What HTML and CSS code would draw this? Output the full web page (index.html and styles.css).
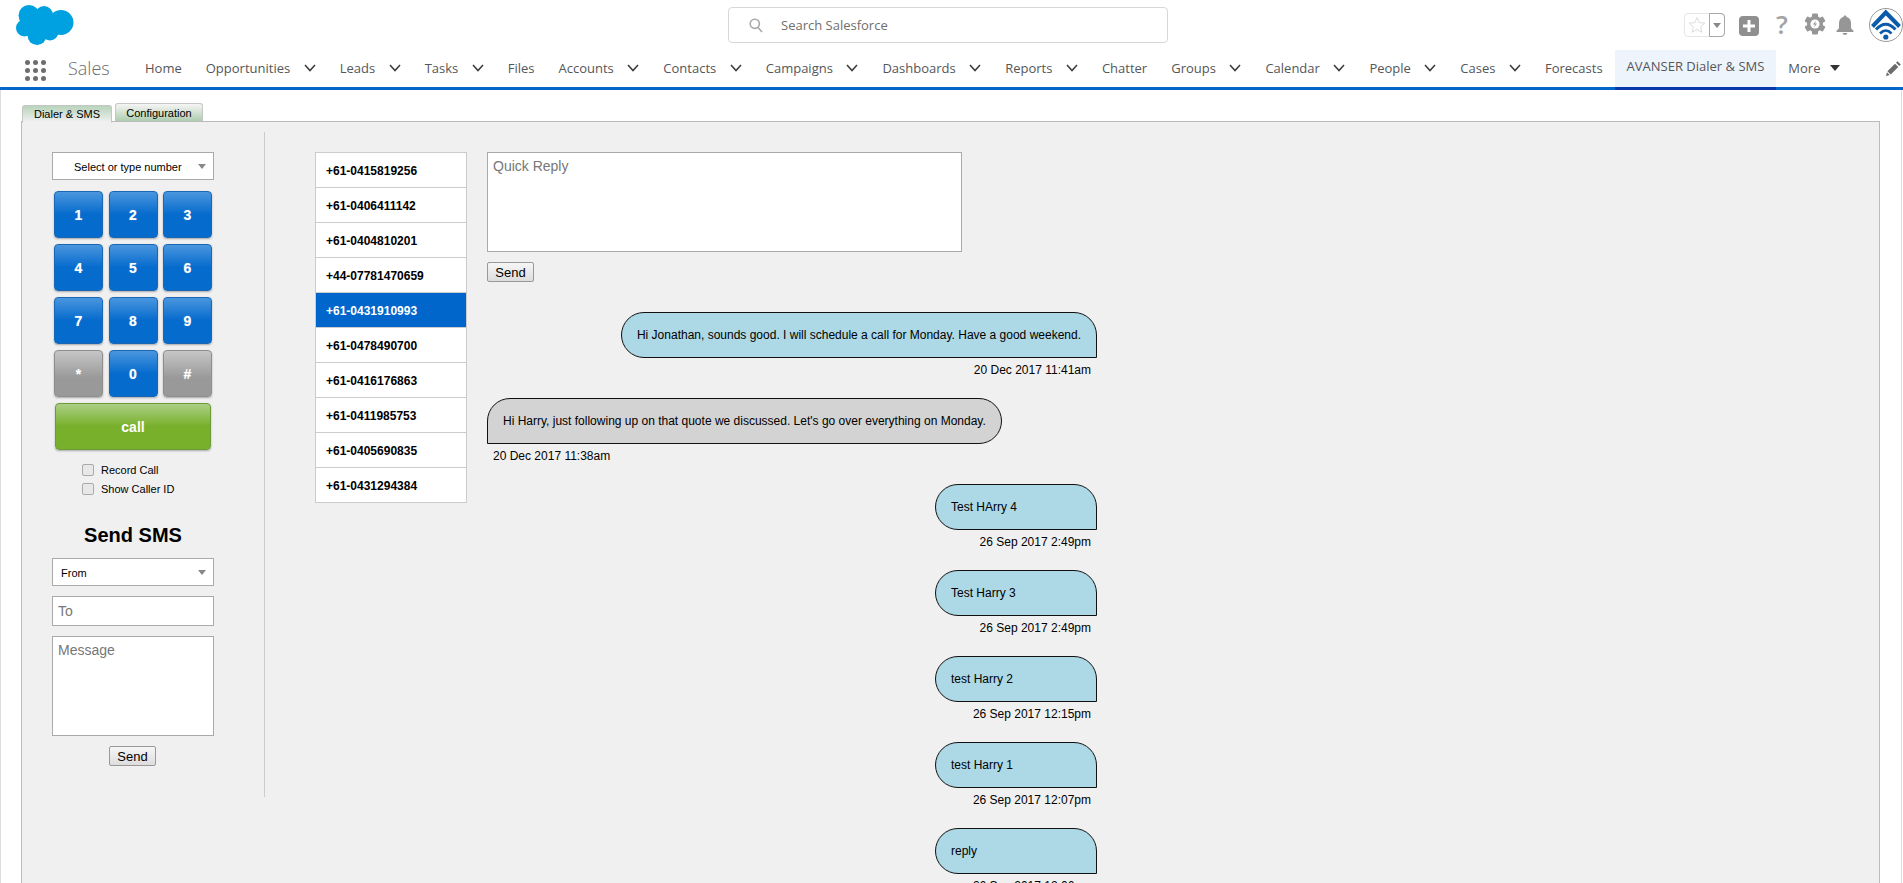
FILE: index.html
```html
<!DOCTYPE html>
<html lang="en">
<head>
<meta charset="utf-8">
<title>AVANSER Dialer &amp; SMS</title>
<link rel="stylesheet" href="styles.css">
</head>
<body>
<header class="topbar">
  <svg class="logo" viewBox="0 0 58 40" aria-label="Salesforce">
    <g fill="#00a1e0">
      <circle cx="13" cy="10.5" r="10.5"/><circle cx="28" cy="10" r="9"/><circle cx="45" cy="17.5" r="12.5"/>
      <circle cx="8.5" cy="23" r="8.5"/><circle cx="21" cy="30.5" r="9.5"/><circle cx="34" cy="27" r="8.5"/>
      <ellipse cx="26" cy="20" rx="18" ry="11"/>
    </g>
  </svg>
  <div class="search">
    <svg class="search-icon" viewBox="0 0 14 15"><circle cx="5.8" cy="5.8" r="4.6"/><line x1="9" y1="9.4" x2="13" y2="14"/></svg>
    <span>Search Salesforce</span>
  </div>
  <div class="utils">
    <div class="fav">
      <span class="fav-star"><svg viewBox="0 0 18 18"><polygon points="9,1.5 11.2,6.6 16.8,7.1 12.6,10.8 13.9,16.3 9,13.4 4.1,16.3 5.4,10.8 1.2,7.1 6.8,6.6"/></svg></span>
      <span class="fav-more"><i class="caret-grey"></i></span>
    </div>
    <svg class="u-plus" viewBox="0 0 20 20"><rect width="20" height="20" rx="4" fill="#8f8f8f"/><path d="M10 4v12M4 10h12" stroke="#fff" stroke-width="3"/></svg>
    <span class="u-help">?</span>
    <svg class="u-gear" viewBox="0 0 22 22">
      <g fill="#969696">
        <rect x="8" y="0.5" width="6" height="21" rx="1"/>
        <rect x="8" y="0.5" width="6" height="21" rx="1" transform="rotate(60 11 11)"/>
        <rect x="8" y="0.5" width="6" height="21" rx="1" transform="rotate(120 11 11)"/>
        <circle cx="11" cy="11" r="8"/>
      </g>
      <circle cx="11" cy="11" r="4.6" fill="#fff"/>
      <path d="M12 7.5l-3 4h2l-1 3 3-4h-2z" fill="#969696"/>
    </svg>
    <svg class="u-bell" viewBox="0 0 18 20"><path d="M9 0.5c1 0 1.6.7 1.6 1.6C13.600 2.800 15 5.200 15 8v4.200c0 1.500 1 2.300 2.300 3.300.7.600.4 1.500-.5 1.500H1.200c-.9 0-1.200-.9-.5-1.500C2 14.500 3 13.700 3 12.200V8c0-2.800 1.400-5.200 4.400-5.900C7.400 1.200 8 .5 9 .5z" fill="#969696"/><path d="M6.600 18h4.800c0 1.100-1.100 1.900-2.400 1.900S6.600 19.100 6.600 18z" fill="#969696"/></svg>
    <svg class="avatar" viewBox="0 0 34 34">
      <circle cx="17" cy="17" r="16.500" fill="#fff" stroke="#999"/>
      <path d="M3.500 18.500L16.800 4.500l13.700 14" fill="none" stroke="#0a5cab" stroke-width="4"/>
      <path d="M7 21.500Q16.800 11 26.500 21.500" fill="none" stroke="#0a5cab" stroke-width="3"/>
      <path d="M11 25.500Q16.800 19.500 22.500 25.500" fill="none" stroke="#0a5cab" stroke-width="2.600"/>
      <circle cx="16.800" cy="29" r="2.600" fill="#0a5cab"/>
    </svg>
  </div>
</header>

<nav class="navbar">
  <div class="launcher">
    <i></i><i></i><i></i><i></i><i></i><i></i><i></i><i></i><i></i>
  </div>
  <span class="app-name">Sales</span>
  <ul class="nav-items">
    <li>Home</li>
    <li>Opportunities<svg class="chev" viewBox="0 0 12 8"><path d="M1 1l5 5.500L11 1"/></svg></li>
    <li>Leads<svg class="chev" viewBox="0 0 12 8"><path d="M1 1l5 5.500L11 1"/></svg></li>
    <li>Tasks<svg class="chev" viewBox="0 0 12 8"><path d="M1 1l5 5.500L11 1"/></svg></li>
    <li>Files</li>
    <li>Accounts<svg class="chev" viewBox="0 0 12 8"><path d="M1 1l5 5.500L11 1"/></svg></li>
    <li>Contacts<svg class="chev" viewBox="0 0 12 8"><path d="M1 1l5 5.500L11 1"/></svg></li>
    <li>Campaigns<svg class="chev" viewBox="0 0 12 8"><path d="M1 1l5 5.500L11 1"/></svg></li>
    <li>Dashboards<svg class="chev" viewBox="0 0 12 8"><path d="M1 1l5 5.500L11 1"/></svg></li>
    <li>Reports<svg class="chev" viewBox="0 0 12 8"><path d="M1 1l5 5.500L11 1"/></svg></li>
    <li>Chatter</li>
    <li>Groups<svg class="chev" viewBox="0 0 12 8"><path d="M1 1l5 5.500L11 1"/></svg></li>
    <li>Calendar<svg class="chev" viewBox="0 0 12 8"><path d="M1 1l5 5.500L11 1"/></svg></li>
    <li>People<svg class="chev" viewBox="0 0 12 8"><path d="M1 1l5 5.500L11 1"/></svg></li>
    <li>Cases<svg class="chev" viewBox="0 0 12 8"><path d="M1 1l5 5.500L11 1"/></svg></li>
    <li>Forecasts</li>
    <li class="active">AVANSER Dialer &amp; SMS</li>
    <li>More<i class="caret-dark"></i></li>
  </ul>
  <svg class="edit" viewBox="0 0 16 16"><path d="M11.500 1.200l3.300 3.300-1.500 1.500-3.300-3.300zM9 3.700L12.300 7l-7.600 7.600-3.300-3.300zM.9 12.300l2.800 2.800-3.700.9z" fill="#6b6b6b"/></svg>
</nav>

<main class="card">
  <div class="tabs">
    <div class="tab tab-on">Dialer &amp; SMS</div>
    <div class="tab tab-off">Configuration</div>
  </div>
  <section class="panel">
    <aside class="side">
      <div class="pick pick-center">Select or type number<i class="caret-grey"></i></div>
      <div class="keypad">
        <button class="key">1</button><button class="key">2</button><button class="key">3</button>
        <button class="key">4</button><button class="key">5</button><button class="key">6</button>
        <button class="key">7</button><button class="key">8</button><button class="key">9</button>
        <button class="key key-grey">*</button><button class="key">0</button><button class="key key-grey">#</button>
      </div>
      <button class="call">call</button>
      <label class="check"><input type="checkbox">Record Call</label>
      <label class="check"><input type="checkbox">Show Caller ID</label>
      <h2 class="sms-title">Send SMS</h2>
      <div class="pick">From<i class="caret-grey"></i></div>
      <input class="field to" placeholder="To">
      <textarea class="field message" placeholder="Message"></textarea>
      <button class="send send-center">Send</button>
    </aside>
    <ul class="numbers">
      <li>+61-0415819256</li>
      <li>+61-0406411142</li>
      <li>+61-0404810201</li>
      <li>+44-07781470659</li>
      <li class="selected">+61-0431910993</li>
      <li>+61-0478490700</li>
      <li>+61-0416176863</li>
      <li>+61-0411985753</li>
      <li>+61-0405690835</li>
      <li>+61-0431294384</li>
    </ul>
    <div class="thread">
      <textarea class="field quick" placeholder="Quick Reply"></textarea>
      <button class="send">Send</button>
      <div class="msgs">
        <div class="msg out"><div class="bubble">Hi Jonathan, sounds good. I will schedule a call for Monday. Have a good weekend.</div><div class="time">20 Dec 2017 11:41am</div></div>
        <div class="msg in"><div class="bubble">Hi Harry, just following up on that quote we discussed. Let's go over everything on Monday.</div><div class="time">20 Dec 2017 11:38am</div></div>
        <div class="msg out"><div class="bubble">Test HArry 4</div><div class="time">26 Sep 2017 2:49pm</div></div>
        <div class="msg out"><div class="bubble">Test Harry 3</div><div class="time">26 Sep 2017 2:49pm</div></div>
        <div class="msg out"><div class="bubble">test Harry 2</div><div class="time">26 Sep 2017 12:15pm</div></div>
        <div class="msg out"><div class="bubble">test Harry 1</div><div class="time">26 Sep 2017 12:07pm</div></div>
        <div class="msg out"><div class="bubble">reply</div><div class="time">26 Sep 2017 12:06pm</div></div>
      </div>
    </div>
  </section>
</main>
</body>
</html>
```
FILE: styles.css
```css
* { box-sizing: border-box; }
html, body { margin: 0; height: 883px; overflow: hidden; background: #fff; }
body { font-family: "Liberation Sans", Arial, sans-serif; color: #000; font-size: 12px; }
ul { list-style: none; margin: 0; padding: 0; }

.topbar { height: 50px; display: flex; align-items: flex-start; padding-left: 16px; }
.logo { width: 58px; height: 40px; margin-top: 5px; flex: none; }
.search { width: 440px; height: 36px; margin: 7px 0 0 654px; border: 1px solid #d8d8d8; border-radius: 4px; display: flex; align-items: center; padding-left: 20px; font: 13px "Open Sans", sans-serif; color: #706e6b; flex: none; }
.search-icon { width: 14px; height: 15px; margin-right: 18px; fill: none; stroke: #a8a8a8; stroke-width: 1.6; }
.utils { margin-left: 516px; display: flex; position: relative; height: 50px; flex: none; width: 219px; }
.fav { margin-top: 13px; width: 42px; height: 24px; border: 1px solid #e6e6e6; border-radius: 4px; display: flex; }
.fav-star { width: 24px; display: flex; align-items: center; justify-content: center; }
.fav-star svg { width: 18px; height: 18px; fill: #fff; stroke: #dcdcdc; }
.fav-more { flex: 1; border: 1px solid #a8a8a8; border-radius: 0 4px 4px 0; margin: -1px -1px -1px 0; display: flex; align-items: center; justify-content: center; }
.u-plus { width: 20px; height: 20px; margin: 16px 0 0 14px; flex: none; }
.u-help { width: 14px; margin: 9px 0 0 16px; font: 600 26px/30px "Open Sans", sans-serif; color: #a3a3a3; text-align: center; flex: none; }
.u-gear { width: 22px; height: 22px; margin: 13px 0 0 15px; flex: none; }
.u-bell { width: 18px; height: 20px; margin: 15px 0 0 10px; flex: none; }
.avatar { width: 34px; height: 34px; margin: 8px 0 0 15px; flex: none; }

.caret-grey { display: block; width: 0; height: 0; border-left: 4px solid transparent; border-right: 4px solid transparent; border-top: 5px solid #888; }
.caret-dark { display: block; width: 0; height: 0; margin-left: 10px; border-left: 5.500px solid transparent; border-right: 5.500px solid transparent; border-top: 6px solid #333; }

.navbar { height: 40px; border-bottom: 3px solid #0466c8; display: flex; align-items: stretch; position: relative; padding-left: 25px; }
.launcher { width: 21px; height: 21px; margin-top: 10px; display: grid; grid-template-columns: repeat(3, 5px); gap: 3px; flex: none; }
.launcher i { width: 5px; height: 5px; border-radius: 50%; background: #6d6d6d; }
.app-name { margin: 0 0 0 22px; width: 65px; font: 300 18px/37px "Open Sans", sans-serif; color: #6b6d70; flex: none; }
.nav-items { display: flex; align-items: stretch; height: 40px; margin-bottom: -3px; }
.nav-items li { display: flex; align-items: center; height: 37px; padding: 0 12px 2px; font: 400 13px "Open Sans", sans-serif; color: #54565a; white-space: nowrap; }
.nav-items li.active { height: 40px; padding-bottom: 5px; background: #eef4fb; border-bottom: 3px solid #0a3aa8; }
.chev { width: 12px; height: 8px; margin-left: 13.5px; fill: none; stroke: #3e3e3c; stroke-width: 1.600; }
.edit { position: absolute; right: 1px; top: 10px; width: 16px; height: 16px; }

.card { height: 793px; margin: 0 1px 0 0; border-left: 1px solid #ddd; border-right: 1px solid #ddd; padding: 13px 21px 0 20px; overflow: hidden; }
.tabs { display: flex; align-items: flex-start; gap: 3px; height: 18px; padding-left: 1px; position: relative; z-index: 1; }
.tab { height: 18px; border: 1px solid #c6c6c6; border-bottom: 0; border-radius: 3px 3px 0 0; font-size: 11px; line-height: 16px; text-align: center; }
.tab-on { width: 90px; height: 18px; margin-top: 2px; background: linear-gradient(#b8d4bb, #f0f0f0); border-bottom: 1px solid #f0f0f0; }
.tab-off { width: 88px; line-height: 18px; background: linear-gradient(#f5f5f5, #aecdaf); }

.panel { height: 780px; border: 1px solid #bbb; background: #f0f0f0; display: flex; align-items: flex-start; padding-top: 10px; overflow: hidden; }
.side { width: 243px; height: 665px; flex: none; border-right: 1px solid #ccc; padding: 20px 0 0 30px; }
.side > * { flex: none; }
.pick { width: 162px; height: 28px; border: 1px solid #aaa; background: #fff; display: flex; align-items: center; padding: 2px 0 0 8px; font-size: 11px; position: relative; }
.pick-center { padding-left: 21px; }
.pick .caret-grey { position: absolute; right: 7px; top: 11px; }
.keypad { display: grid; grid-template-columns: repeat(3, 49px); column-gap: 5.500px; row-gap: 6px; margin: 11px 0 0 2px; }
.key { height: 47px; padding: 0; border: 1px solid #1a67b5; border-radius: 4px; background: linear-gradient(#4a96de, #056bcd 50%); box-shadow: 0 1px 2px rgba(0,0,0,.3); color: #fff; font: 700 14px "Liberation Sans", sans-serif; text-shadow: 0 0 1px rgba(255,255,255,.5); }
.key-grey { border-color: #8e8e8e; background: linear-gradient(#c6c6c6, #999 60%); }
.call { display: block; width: 156px; height: 47px; margin: 6px 0 0 3px; padding: 0; border: 1px solid #6c9c3a; border-radius: 4px; background: linear-gradient(#abcf85, #78b02b 50%); box-shadow: 0 1px 2px rgba(0,0,0,.3); color: #fff; font: 700 14px "Liberation Sans", sans-serif; }
.check { display: flex; align-items: center; height: 19px; margin-left: 30px; font-size: 11px; }
.call + .check { margin-top: 10px; }
.check input { appearance: none; width: 12px; height: 12px; margin: 0 7px 0 0; background: #e8e8e8; border: 1px solid #aaa; border-radius: 2px; }
.sms-title { margin: 25px 0 11px; width: 162px; text-align: center; font: 700 20px/24px "Liberation Sans", sans-serif; }
.field { display: block; border: 1px solid #aaa; background: #fff; font: 14px "Liberation Sans", sans-serif; color: #000; padding: 5px; resize: none; outline: 0; border-radius: 0; }
.field::placeholder { color: #777; opacity: 1; }
.to { width: 162px; height: 30px; margin-top: 10px; }
.message { width: 162px; height: 100px; margin-top: 10px; }
.send { display: block; width: 47px; height: 20px; padding: 0; border: 1px solid #999; border-radius: 2px; background: linear-gradient(#f6f6f6, #ddd); font: 13px "Liberation Sans", sans-serif; color: #000; }
.send-center { margin: 10px 0 0 57px; }

.numbers { width: 152px; margin: 20px 0 0 50px; border: 1px solid #ccc; background: #fff; flex: none; }
.numbers li { height: 35px; display: flex; align-items: center; padding: 1px 0 0 10px; font-weight: 700; font-size: 12px; border-bottom: 1px solid #ccc; }
.numbers li:last-child { height: 34px; border-bottom: 0; }
.numbers li.selected { background: #0066cc; color: #fff; }

.thread { width: 610px; margin: 20px 0 0 20px; flex: none; }
.quick { width: 475px; height: 100px; }
.thread .send { margin-top: 10px; }
.msgs { margin-top: 30px; display: flex; flex-direction: column; }
.msg { height: 86px; flex: none; display: flex; flex-direction: column; }
.msg.out { align-items: flex-end; }
.msg.in { align-items: flex-start; }
.bubble { min-width: 162px; height: 46px; padding: 0 15px; display: flex; align-items: center; border: 1px solid #111; font-size: 12px; }
.out .bubble { background: #add8e6; border-radius: 25px 25px 0 25px; }
.in .bubble { background: #d3d3d3; border-radius: 25px 25px 25px 0; }
.time { margin-top: 5px; line-height: 14px; font-size: 12px; }
.out .time { padding-right: 6px; }
.in .time { padding-left: 6px; }
```
